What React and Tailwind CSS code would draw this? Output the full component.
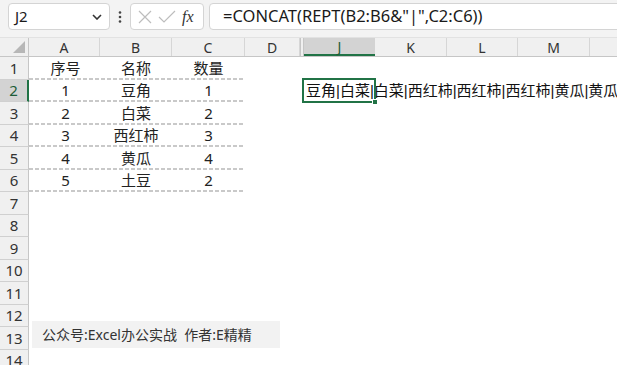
import React from 'react';

const cols = [
  { key: 'A', w: 'w-[71px]' },
  { key: 'B', w: 'w-[72px]' },
  { key: 'C', w: 'w-[73px]' },
  { key: 'D', w: 'w-[55px]' },
  { key: 'gap', w: 'w-[4px]' },
  { key: 'J', w: 'w-[71px]' },
  { key: 'K', w: 'w-[72px]' },
  { key: 'L', w: 'w-[71px]' },
  { key: 'M', w: 'w-[72px]' },
  { key: 'N', w: 'w-[80px]' },
];

const table = [
  ['序号', '名称', '数量'],
  ['1', '豆角', '1'],
  ['2', '白菜', '2'],
  ['3', '西红柿', '3'],
  ['4', '黄瓜', '4'],
  ['5', '土豆', '2'],
];

const result = '豆角|白菜|白菜|西红柿|西红柿|西红柿|黄瓜|黄瓜|黄瓜|黄瓜|土豆|土豆|';

const Toolbar = () => (
  <div className="h-[37px] bg-[#f3f3f3] flex items-start pt-[3px] pl-[8px]">
    <div className="w-[102px] h-[27px] shrink-0 bg-white border border-[#d4d4d4] rounded-[4px] flex items-center justify-between pl-[6px] pr-[7px]">
      <span className="text-[15px] text-[#1a1a1a]">J2</span>
      <svg width="10" height="6" viewBox="0 0 10 6">
        <path d="M1 1l4 4 4-4" fill="none" stroke="#333" strokeWidth="1.6" />
      </svg>
    </div>
    <div className="w-[20px] h-[27px] shrink-0 flex items-center justify-center">
      <svg width="4" height="14" viewBox="0 0 4 14">
        <circle cx="2" cy="2.5" r="1.3" fill="#444" />
        <circle cx="2" cy="7" r="1.3" fill="#444" />
        <circle cx="2" cy="11.5" r="1.3" fill="#444" />
      </svg>
    </div>
    <div className="w-[74px] h-[27px] shrink-0 bg-white border border-[#d4d4d4] rounded-[4px] flex items-center pl-[6px]">
      <svg width="14" height="14" viewBox="0 0 14 14" className="ml-[1px]">
        <path d="M1 1l12 12M13 1L1 13" stroke="#bdbdbd" strokeWidth="1.2" />
      </svg>
      <svg width="18" height="14" viewBox="0 0 18 14" className="ml-[6px]">
        <path d="M1 7l5 5L17 1" fill="none" stroke="#bdbdbd" strokeWidth="1.2" />
      </svg>
      <span className="ml-[6px] italic text-[16px] text-[#333] font-['Liberation_Serif',serif]">fx</span>
    </div>
    <div className="ml-[5px] w-[430px] h-[27px] shrink-0 bg-white border border-[#d4d4d4] rounded-[4px] flex items-center pl-[13px]">
      <span className="text-[16.5px] text-[#1a1a1a] whitespace-nowrap">=CONCAT(REPT(B2:B6&amp;"|",C2:C6))</span>
    </div>
  </div>
);

const HeaderRow = () => (
  <div className="h-[20px] flex bg-[#f0f0f0] border-b border-[#c6c6c6] border-t border-t-[#e2e2e2]">
    <div className="w-[29px] shrink-0 border-r border-[#c6c6c6] relative">
      <svg width="12" height="12" viewBox="0 0 12 12" className="absolute right-[3px] bottom-[3px]">
        <polygon points="12,0 12,12 0,12" fill="#b7b7b7" />
      </svg>
    </div>
    {cols.map((c) =>
      c.key === 'gap' ? (
        <div key={c.key} className={`${c.w} shrink-0 border-l border-r border-[#c6c6c6]`} />
      ) : (
        <div
          key={c.key}
          className={`${c.w} shrink-0 flex items-center justify-center text-[14px] ${
            c.key === 'J'
              ? 'bg-[#d3d3d3] border-b-2 border-[#217346] text-[#1d5c38]'
              : 'border-r border-[#d6d6d6] text-[#333]'
          }`}
        >
          {c.key}
        </div>
      )
    )}
  </div>
);

const Row = ({ n }) => {
  const data = table[n - 1];
  const active = n === 2;
  return (
    <div className="h-[22.5px] flex">
      <div
        className={`w-[29px] shrink-0 flex items-center justify-center text-[15px] border-b border-[#d0d0d0] ${
          active ? 'bg-[#d3d3d3] border-r-2 border-r-[#217346] text-[#1d5c38]' : 'bg-[#f0f0f0] border-r border-r-[#c6c6c6] text-[#333]'
        }`}
      >
        {n}
      </div>
      <div
        className={`flex shrink-0 w-[216px] pl-[2px] ${
          data
            ? "bg-[image:repeating-linear-gradient(90deg,#c9c9c9_0_4px,transparent_4px_6px)] bg-no-repeat bg-bottom bg-[length:100%_2px]"
            : ''
        }`}
      >
        {[0, 1, 2].map((i) => (
          <div
            key={i}
            className={`${i === 0 ? 'w-[69px]' : cols[i].w} shrink-0 flex items-center justify-center text-[15px] text-[#222] pb-[1px]`}
          >
            {data ? data[i] : ''}
          </div>
        ))}
      </div>
      <div className="w-[55px] shrink-0" />
      <div className="w-[4px] shrink-0" />
      <div className="w-[71px] shrink-0 relative">
        {active && (
          <>
            <div className="absolute inset-0 flex items-center pl-[2px] text-[15px] text-[#111] whitespace-nowrap font-['Liberation_Sans','Noto_Sans_CJK_SC',sans-serif]">
              {result}
            </div>
            <div className="absolute -left-[2px] -top-[1.5px] -right-[1px] -bottom-[1px] border-2 border-[#217346]" />
            <div className="absolute -right-[3px] -bottom-[3px] w-[6px] h-[6px] bg-[#217346] border border-white" />
          </>
        )}
      </div>
    </div>
  );
};

export default function App() {
  return (
    <div className="w-[617px] h-[365px] overflow-hidden bg-white relative font-['Noto_Sans','Noto_Sans_CJK_SC',sans-serif]">
      <Toolbar />
      <HeaderRow />
      <div className="flex flex-col">
        {Array.from({ length: 14 }, (_, i) => (
          <Row key={i} n={i + 1} />
        ))}
      </div>
      <div className="absolute left-[32px] top-[321px] w-[248px] h-[27px] bg-[#f2f2f2] flex items-center pl-[10px] text-[14px] text-[#333] whitespace-pre">
        公众号:Excel办公实战  作者:E精精
      </div>
    </div>
  );
}
